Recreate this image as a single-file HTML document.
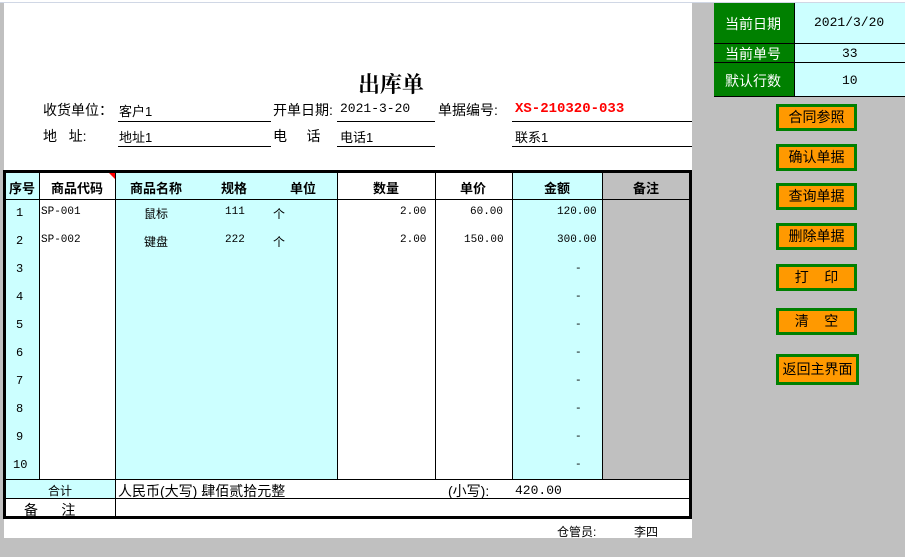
<!DOCTYPE html>
<html><head><meta charset="utf-8"><style>
*{margin:0;padding:0;box-sizing:border-box}
body{width:905px;height:557px;background:#c0c0c0;position:relative;overflow:hidden;font-family:"Liberation Sans","Noto Sans CJK SC","WenQuanYi Zen Hei",sans-serif;font-size:13px;color:#000}
.a{position:absolute;white-space:nowrap}
.sheet{position:absolute;left:4px;top:3px;width:688px;height:535px;background:#fff}
.hl{position:absolute;height:1px;background:#000}
.vl{position:absolute;width:1px;background:#000}
.c{position:absolute}
.mono{font-family:"Liberation Mono","Noto Sans CJK SC",monospace}
.btn{position:absolute;left:776px;width:81px;height:27px;background:#ff9900;border:3px solid #008000;text-align:center;line-height:21px;font-size:14px}
.b{font-weight:bold}
</style></head><body>
<div class="a" style="left:0;top:0;width:905px;height:3px;background:#fff;border-bottom:1px solid #d0d7e5"></div>
<div class="sheet"></div>
<div class="a b" style="left:358px;top:68px;font-size:22px;font-family:'Liberation Serif','Noto Serif CJK SC',serif">出库单</div>
<div class="a" style="left:43px;top:100px;font-size:14px">收货单位：</div>
<div class="a" style="left:119px;top:101px">客户1</div>
<div class="hl" style="left:118px;top:121px;width:153px"></div>
<div class="a" style="left:273px;top:100px;font-size:14px">开单日期:</div>
<div class="a mono" style="left:340px;top:101px">2021-3-20</div>
<div class="hl" style="left:337px;top:121px;width:98px"></div>
<div class="a" style="left:438px;top:100px;font-size:14px">单据编号:</div>
<div class="a mono b" style="left:515px;top:101px;color:#ff0000;font-size:14px">XS-210320-033</div>
<div class="hl" style="left:512px;top:121px;width:180px"></div>
<div class="a" style="left:43px;top:126px;font-size:14px">地&nbsp;&nbsp;&nbsp;址:</div>
<div class="a" style="left:119px;top:127px">地址1</div>
<div class="hl" style="left:118px;top:146px;width:153px"></div>
<div class="a" style="left:273px;top:126px;font-size:14px">电&nbsp;&nbsp;&nbsp;&nbsp;&nbsp;话</div>
<div class="a" style="left:340px;top:127px">电话1</div>
<div class="hl" style="left:337px;top:146px;width:98px"></div>
<div class="a" style="left:515px;top:127px">联系1</div>
<div class="hl" style="left:512px;top:146px;width:180px"></div>

<div class="c" style="left:4px;top:172px;width:35px;height:308px;background:#ccffff"></div>
<div class="c" style="left:115px;top:172px;width:222px;height:308px;background:#ccffff"></div>
<div class="c" style="left:512px;top:172px;width:90px;height:308px;background:#ccffff"></div>
<div class="c" style="left:602px;top:172px;width:89px;height:308px;background:#c0c0c0"></div>
<div class="c" style="left:4px;top:480px;width:111px;height:19px;background:#ccffff"></div>
<div class="hl" style="left:3px;top:170px;width:689px;height:3px"></div>
<div class="hl" style="left:3px;top:516px;width:689px;height:3px"></div>
<div class="vl" style="left:3px;top:170px;height:349px;width:3px"></div>
<div class="vl" style="left:689px;top:170px;height:349px;width:3px"></div>
<div class="hl" style="left:4px;top:199px;width:687px"></div>
<div class="hl" style="left:4px;top:479px;width:687px"></div>
<div class="hl" style="left:4px;top:498px;width:687px"></div>
<div class="vl" style="left:39px;top:172px;height:307px"></div>
<div class="vl" style="left:115px;top:172px;height:344px"></div>
<div class="vl" style="left:337px;top:172px;height:307px"></div>
<div class="vl" style="left:435px;top:172px;height:307px"></div>
<div class="vl" style="left:512px;top:172px;height:307px"></div>
<div class="vl" style="left:602px;top:172px;height:307px"></div>
<div class="a" style="left:109px;top:173px;width:0;height:0;border-left:6px solid transparent;border-top:6px solid #ff0000"></div>
<div class="a b" style="left:9px;top:178px">序号</div>
<div class="a b" style="left:51px;top:178px">商品代码</div>
<div class="a b" style="left:130px;top:178px">商品名称</div>
<div class="a b" style="left:221px;top:178px">规格</div>
<div class="a b" style="left:290px;top:178px">单位</div>
<div class="a b" style="left:373px;top:178px">数量</div>
<div class="a b" style="left:460px;top:178px">单价</div>
<div class="a b" style="left:544px;top:178px">金额</div>
<div class="a b" style="left:633px;top:178px">备注</div>
<div class="a mono" style="left:0;top:199px;font-size:12px;line-height:28px">
<div style="position:absolute;left:16px;top:0">1</div>
<div style="position:absolute;left:16px;top:28px">2</div>
<div style="position:absolute;left:16px;top:56px">3</div>
<div style="position:absolute;left:16px;top:84px">4</div>
<div style="position:absolute;left:16px;top:112px">5</div>
<div style="position:absolute;left:16px;top:140px">6</div>
<div style="position:absolute;left:16px;top:168px">7</div>
<div style="position:absolute;left:16px;top:196px">8</div>
<div style="position:absolute;left:16px;top:224px">9</div>
<div style="position:absolute;left:13px;top:252px">10</div>
</div>
<div class="a mono" style="left:41px;top:206px;font-size:11px">SP-001</div>
<div class="a mono" style="left:41px;top:234px;font-size:11px">SP-002</div>
<div class="a" style="left:144px;top:205px;font-size:12px">鼠标</div>
<div class="a" style="left:144px;top:233px;font-size:12px">键盘</div>
<div class="a mono" style="left:225px;top:206px;font-size:11px">111</div>
<div class="a mono" style="left:225px;top:234px;font-size:11px">222</div>
<div class="a" style="left:273px;top:205px;font-size:12px">个</div>
<div class="a" style="left:273px;top:233px;font-size:12px">个</div>
<div class="a mono" style="left:400px;top:206px;font-size:11px">2.00</div>
<div class="a mono" style="left:400px;top:234px;font-size:11px">2.00</div>
<div class="a mono" style="left:470px;top:206px;font-size:11px">60.00</div>
<div class="a mono" style="left:464px;top:234px;font-size:11px">150.00</div>
<div class="a mono" style="left:557px;top:206px;font-size:11px">120.00</div>
<div class="a mono" style="left:557px;top:234px;font-size:11px">300.00</div>
<div class="a mono" style="left:575px;top:255px;font-size:11px;line-height:28px">-<br>-<br>-<br>-<br>-<br>-<br>-<br>-</div>
<div class="a" style="left:48px;top:482px;font-size:12px">合计</div>
<div class="a" style="left:118px;top:481px;font-size:14px">人民币(大写) 肆佰贰拾元整</div>
<div class="a" style="left:448px;top:481px;font-size:14px">(小写):</div>
<div class="a mono" style="left:515px;top:483px;font-size:13px">420.00</div>
<div class="a" style="left:24px;top:500px;font-size:14px">备&nbsp;&nbsp;&nbsp;&nbsp;&nbsp;&nbsp;注</div>
<div class="a" style="left:557px;top:523px;font-size:12px">仓管员:</div>
<div class="a" style="left:634px;top:523px;font-size:12px">李四</div>

<div class="c" style="left:714px;top:3px;width:80px;height:94px;background:#008000"></div>
<div class="c" style="left:794px;top:3px;width:111px;height:94px;background:#ccffff"></div>
<div class="hl" style="left:714px;top:43px;width:191px"></div>
<div class="hl" style="left:714px;top:62px;width:191px"></div>
<div class="hl" style="left:714px;top:96px;width:191px"></div>
<div class="vl" style="left:794px;top:3px;height:94px"></div>
<div class="a" style="left:725px;top:14px;color:#fff;font-size:14px">当前日期</div>
<div class="a" style="left:725px;top:44px;color:#fff;font-size:14px">当前单号</div>
<div class="a" style="left:725px;top:71px;color:#fff;font-size:14px">默认行数</div>
<div class="a mono" style="left:814px;top:15px;font-size:13px">2021/3/20</div>
<div class="a mono" style="left:842px;top:46px;font-size:13px">33</div>
<div class="a mono" style="left:842px;top:73px;font-size:13px">10</div>
<div class="btn" style="top:104px">合同参照</div>
<div class="btn" style="top:144px">确认单据</div>
<div class="btn" style="top:183px">查询单据</div>
<div class="btn" style="top:223px">删除单据</div>
<div class="btn" style="top:264px">打&nbsp;&nbsp;&nbsp;&nbsp;印</div>
<div class="btn" style="top:308px">清&nbsp;&nbsp;&nbsp;&nbsp;空</div>
<div class="btn" style="top:354px;width:83px;height:31px;line-height:25px">返回主界面</div>
</body></html>
